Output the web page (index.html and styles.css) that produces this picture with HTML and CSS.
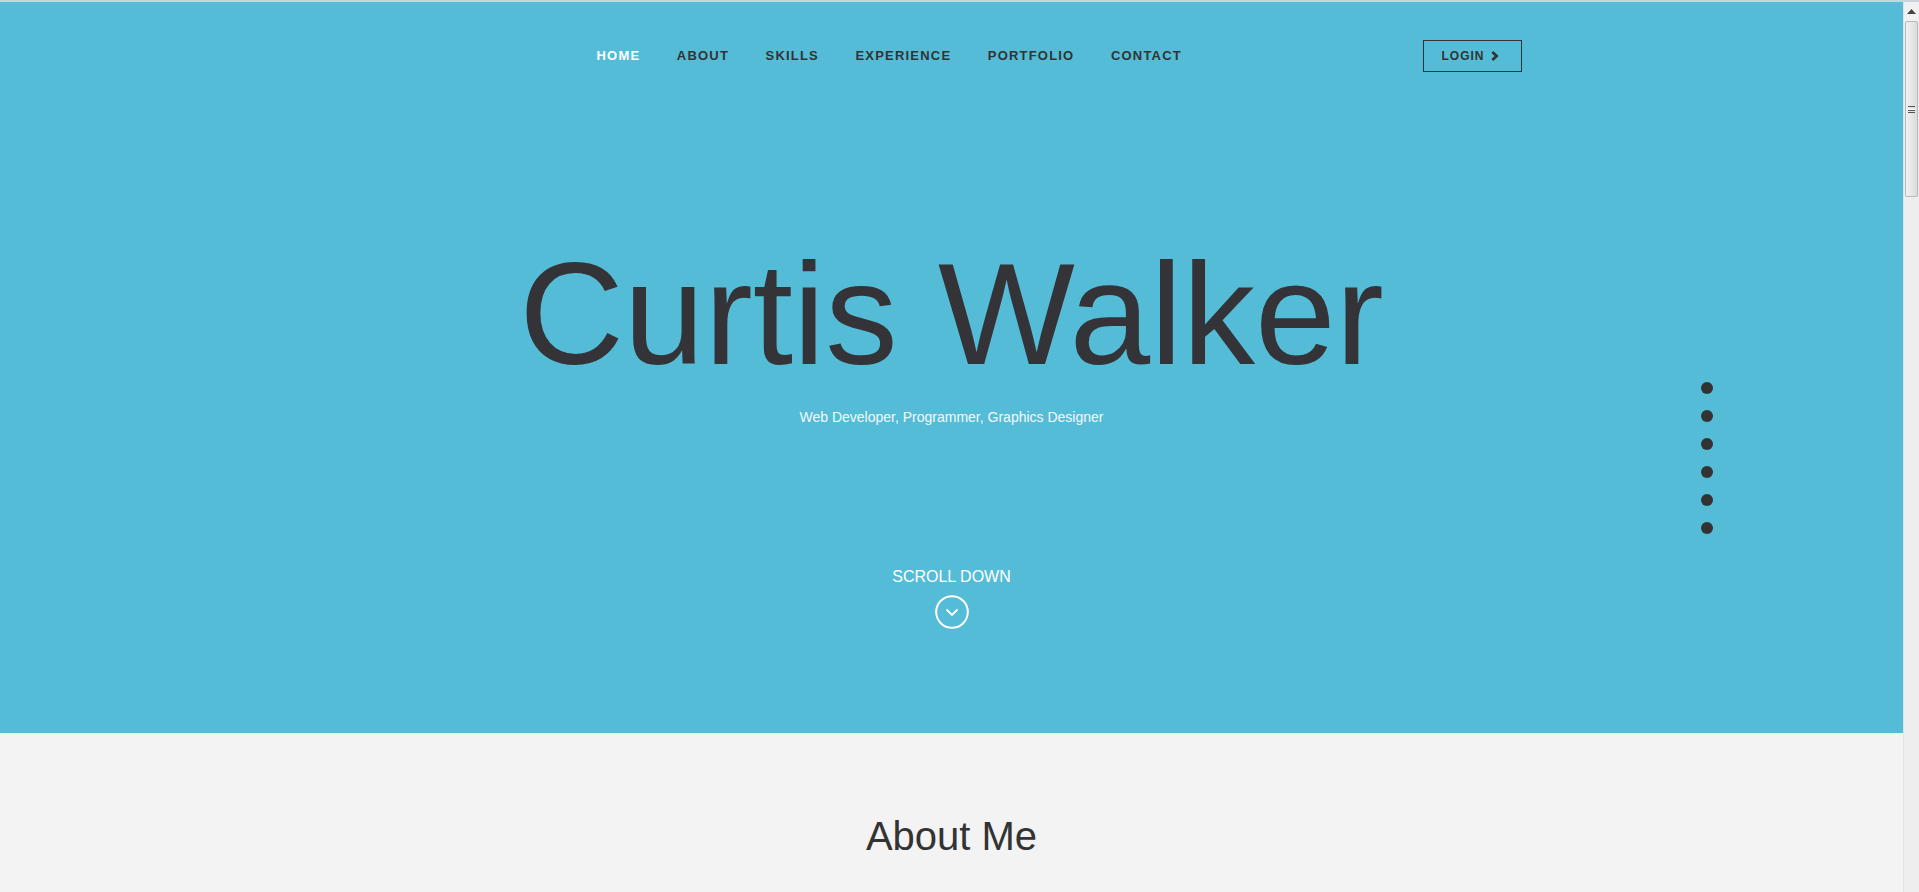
FILE: index.html
```html
<!DOCTYPE html>
<html lang="en">
<head>
<meta charset="utf-8">
<title>Curtis Walker</title>
<link rel="stylesheet" href="styles.css">
</head>
<body>
<div class="topline"></div>
<div class="frame">
  <div class="page">
    <section class="hero">
      <header class="header">
        <nav class="nav">
          <a class="nav-link active" href="#">HOME</a>
          <a class="nav-link" href="#">ABOUT</a>
          <a class="nav-link" href="#">SKILLS</a>
          <a class="nav-link" href="#">EXPERIENCE</a>
          <a class="nav-link" href="#">PORTFOLIO</a>
          <a class="nav-link" href="#">CONTACT</a>
        </nav>
        <a class="login" href="#">LOGIN <svg class="login-icon" width="8" height="10" viewBox="0 0 8 10"><path d="M1.3 1 L5.6 5 L1.3 9" fill="none" stroke="#333" stroke-width="2.8"/></svg></a>
      </header>
      <h1 class="title">Curtis Walker</h1>
      <p class="subtitle">Web Developer, Programmer, Graphics Designer</p>
      <div class="scroll">SCROLL DOWN</div>
      <div class="scroll-icon">
        <svg width="34" height="34" viewBox="0 0 34 34"><circle cx="17" cy="17" r="15.8" fill="none" stroke="#fff" stroke-width="2"/><path d="M11.5 14.5 L17 20 L22.5 14.5" fill="none" stroke="#fff" stroke-width="1.8"/></svg>
      </div>
      <ul class="dots">
        <li class="dot"></li>
        <li class="dot"></li>
        <li class="dot"></li>
        <li class="dot"></li>
        <li class="dot"></li>
        <li class="dot"></li>
      </ul>
    </section>
    <section class="about">
      <h2 class="about-title">About Me</h2>
    </section>
  </div>
  <div class="scrollbar">
    <div class="sb-up"><svg width="9" height="5" viewBox="0 0 9 5"><path d="M0 5 L4.5 0 L9 5 Z" fill="#444"/></svg></div>
    <div class="sb-thumb"><div class="grip"></div></div>
  </div>
</div>
</body>
</html>
```

FILE: styles.css
```css
html, body {
  margin: 0;
  padding: 0;
  height: 892px;
  overflow: hidden;
}
body {
  font-family: "Liberation Sans", Arial, sans-serif;
  display: flex;
  flex-direction: column;
  background: #f3f3f3;
}
.topline {
  height: 2px;
  background: #c9d4e0;
  flex: none;
}
.frame {
  flex: 1;
  display: flex;
  min-height: 0;
}
.page {
  flex: 1;
  display: flex;
  flex-direction: column;
  min-width: 0;
}
.hero {
  position: relative;
  height: 731px;
  flex: none;
  background: #54bcd6;
  display: flex;
  flex-direction: column;
  align-items: center;
}
.header {
  width: 1140px;
  height: 32px;
  margin-top: 38px;
  display: flex;
  align-items: center;
}
.nav {
  display: flex;
  gap: 36.5px;
  margin-left: 215px;
  margin-bottom: 2px;
}
.nav-link {
  font-size: 13px;
  font-weight: bold;
  letter-spacing: 1.2px;
  color: #333;
  text-decoration: none;
}
.nav-link.active {
  color: #fff;
}
.login {
  margin-left: auto;
  box-sizing: border-box;
  width: 99px;
  height: 32px;
  border: 1px solid #333;
  display: flex;
  align-items: center;
  padding-left: 18px;
  font-size: 12px;
  font-weight: bold;
  letter-spacing: 1px;
  color: #333;
  text-decoration: none;
}
.login-icon {
  margin-left: 6px;
}
.title {
  margin: 170px 0 0;
  font-size: 145px;
  line-height: 144px;
  font-weight: normal;
  color: #333338;
}
.subtitle {
  margin: 21px 0 0;
  font-size: 14px;
  line-height: 20px;
  color: #f4f8fa;
}
.scroll {
  margin-top: 140px;
  font-size: 16px;
  line-height: 20px;
  color: #fff;
}
.scroll-icon {
  margin-top: 8px;
  height: 34px;
}
.dots {
  position: absolute;
  left: 1701px;
  top: 380px;
  margin: 0;
  padding: 0;
  list-style: none;
  display: flex;
  flex-direction: column;
  gap: 16px;
}
.dot {
  width: 12px;
  height: 12px;
  border-radius: 50%;
  background: #333;
}
.about {
  flex: 1;
  background: #f3f3f3;
  display: flex;
  flex-direction: column;
  align-items: center;
}
.about-title {
  margin: 81px 0 0;
  font-size: 40px;
  line-height: 44px;
  font-weight: normal;
  color: #333;
}
.scrollbar {
  width: 16px;
  flex: none;
  background: #eeeeee;
  border-left: 1px solid #e2e2e2;
  box-sizing: border-box;
  display: flex;
  flex-direction: column;
  align-items: center;
}
.sb-up {
  height: 19px;
  width: 100%;
  display: flex;
  align-items: center;
  justify-content: center;
  background: #f1f1f1;
}
.sb-thumb {
  width: 13px;
  height: 176px;
  box-sizing: border-box;
  border: 1px solid #b8b8b8;
  border-radius: 2px;
  background: linear-gradient(to right, #f2f2f2, #dcdcdc);
  display: flex;
  align-items: center;
  justify-content: center;
}
.grip {
  width: 7px;
  height: 5px;
  border-top: 1px solid #555;
  border-bottom: 1px solid #555;
  background: linear-gradient(#fff 0 1px, #555 1px 2px, #fff 2px);
  background-size: 100% 2px;
  background-repeat: no-repeat;
  background-position: 0 2px;
}
```
